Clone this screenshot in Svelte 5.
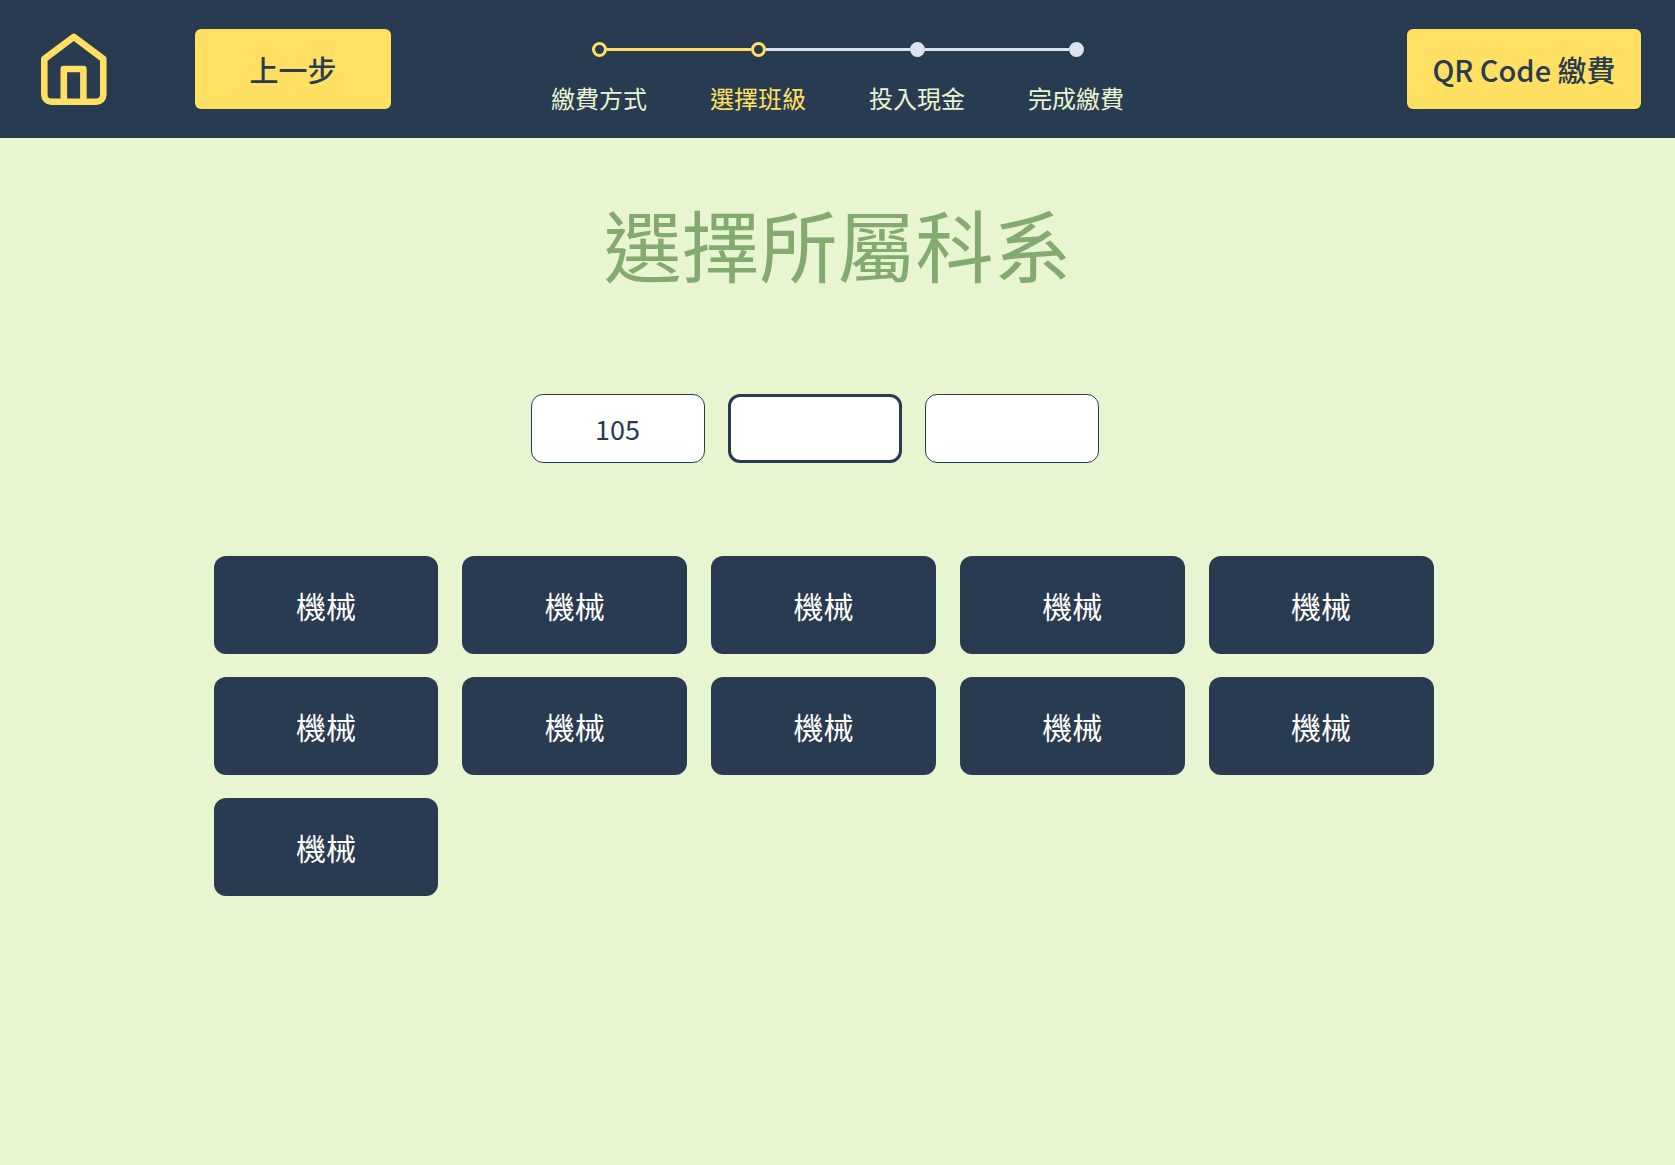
<script>
  const steps = [
    { label: '繳費方式', state: 'done' },
    { label: '選擇班級', state: 'current' },
    { label: '投入現金', state: 'todo' },
    { label: '完成繳費', state: 'todo' }
  ];

  let fields = $state([
    { name: '學年', value: '105' },
    { name: '科系', value: '' },
    { name: '班級', value: '' }
  ]);
  let active = $state(1);

  const departments = Array.from({ length: 11 }, () => '機械');
</script>

<header class="topbar">
  <div class="left">
    <a class="home" href="#home" aria-label="首頁">
      <svg viewBox="0 0 66 72" width="66" height="72" fill="none" stroke="currentColor" stroke-width="6.6" stroke-linejoin="round">
        <path d="M32.800 3.800 L62.300 26 V61.700 A7 7 0 0 1 55.300 68.700 H10.300 A7 7 0 0 1 3.300 61.700 V26 Z" />
        <path d="M22.800 68.700 V36 H42.400 V68.700" />
      </svg>
    </a>
    <button class="action back" type="button">上一步</button>
  </div>

  <ol class="steps">
    {#each steps as step}
      <li class={step.state} aria-current={step.state === 'current' ? 'step' : undefined}>
        <span class="track"><span class="dot"></span></span>
        <span class="label">{step.label}</span>
      </li>
    {/each}
  </ol>

  <button class="action qr" type="button">QR Code 繳費</button>
</header>

<main>
  <h1>選擇所屬科系</h1>

  <div class="fields">
    {#each fields as field, i}
      <input
        type="text"
        aria-label={field.name}
        class:active={active === i}
        bind:value={field.value}
        onfocus={() => (active = i)}
      />
    {/each}
  </div>

  <div class="departments">
    {#each departments as name}
      <button type="button" onclick={() => (fields[1].value = name)}>{name}</button>
    {/each}
  </div>
</main>

<style>
  :global(body) {
    background: #e8f5d1;
    color: #293b50;
    font-family: 'Noto Sans CJK TC', 'Noto Sans', sans-serif;
  }

  button,
  input {
    box-sizing: border-box;
    margin: 0;
    font-family: inherit;
    color: inherit;
  }

  button {
    border: 0;
    cursor: pointer;
  }

  .topbar {
    box-sizing: border-box;
    display: grid;
    grid-template-columns: 1fr auto 1fr;
    align-items: start;
    min-height: 138px;
    padding: 29px 34px 16px;
    background: #293b50;
  }

  .left {
    display: flex;
    align-items: center;
    gap: 88px;
    padding-left: 7px;
  }

  .home {
    display: flex;
    color: #ffe062;
  }

  .action {
    height: 80px;
    border-radius: 6px;
    background: #ffe062;
    font-size: 29px;
    font-weight: 500;
    line-height: 44px;
    white-space: nowrap;
  }

  .back {
    width: 196px;
  }

  .qr {
    width: 234px;
    padding: 0;
    justify-self: end;
  }

  .steps {
    display: flex;
    margin: 0;
    padding: 13px 0 0;
    list-style: none;
    color: #dce3ee;
  }

  .steps li {
    display: flex;
    flex-direction: column;
    width: 159px;
    text-align: center;
  }

  .track {
    display: flex;
    align-items: center;
    height: 15px;
  }

  .track::before,
  .track::after {
    content: '';
    flex: 1;
    height: 3px;
    background: currentColor;
  }

  .steps li:first-child .track::before,
  .steps li:last-child .track::after {
    background: none;
  }

  .dot {
    box-sizing: border-box;
    width: 15px;
    height: 15px;
    border: 3px solid currentColor;
    border-radius: 50%;
    background: currentColor;
  }

  .done .track,
  .current .track {
    color: #ffe062;
  }

  .done .dot,
  .current .dot {
    background: none;
  }

  .current .track::after {
    background: #dce3ee;
  }

  .label {
    margin-top: 24px;
    color: #e8f5d1;
    font-size: 24px;
    line-height: 34px;
  }

  .current .label {
    color: #ffe062;
  }

  h1 {
    margin: 49px 0 0;
    color: #84ab6f;
    font-size: 78px;
    font-weight: 400;
    line-height: 112px;
    text-align: center;
  }

  .fields {
    display: flex;
    justify-content: center;
    gap: 23px;
    margin-top: 95px;
    padding-right: 46px;
  }

  input {
    width: 174px;
    height: 69px;
    padding: 0 8px;
    border: 1px solid #293b50;
    border-radius: 12px;
    outline: 0;
    background: #fff;
    font-size: 27px;
    line-height: 40px;
    text-align: center;
  }

  input.active {
    border-width: 3px;
  }

  .departments {
    box-sizing: border-box;
    display: grid;
    grid-template-columns: repeat(5, 1fr);
    gap: 23px 24px;
    max-width: 1248px;
    margin: 93px auto 0;
    padding-right: 28px;
  }

  .departments button {
    height: 98px;
    border-radius: 12px;
    background: #293b50;
    color: #fff;
    font-size: 30px;
    line-height: 44px;
  }
</style>
